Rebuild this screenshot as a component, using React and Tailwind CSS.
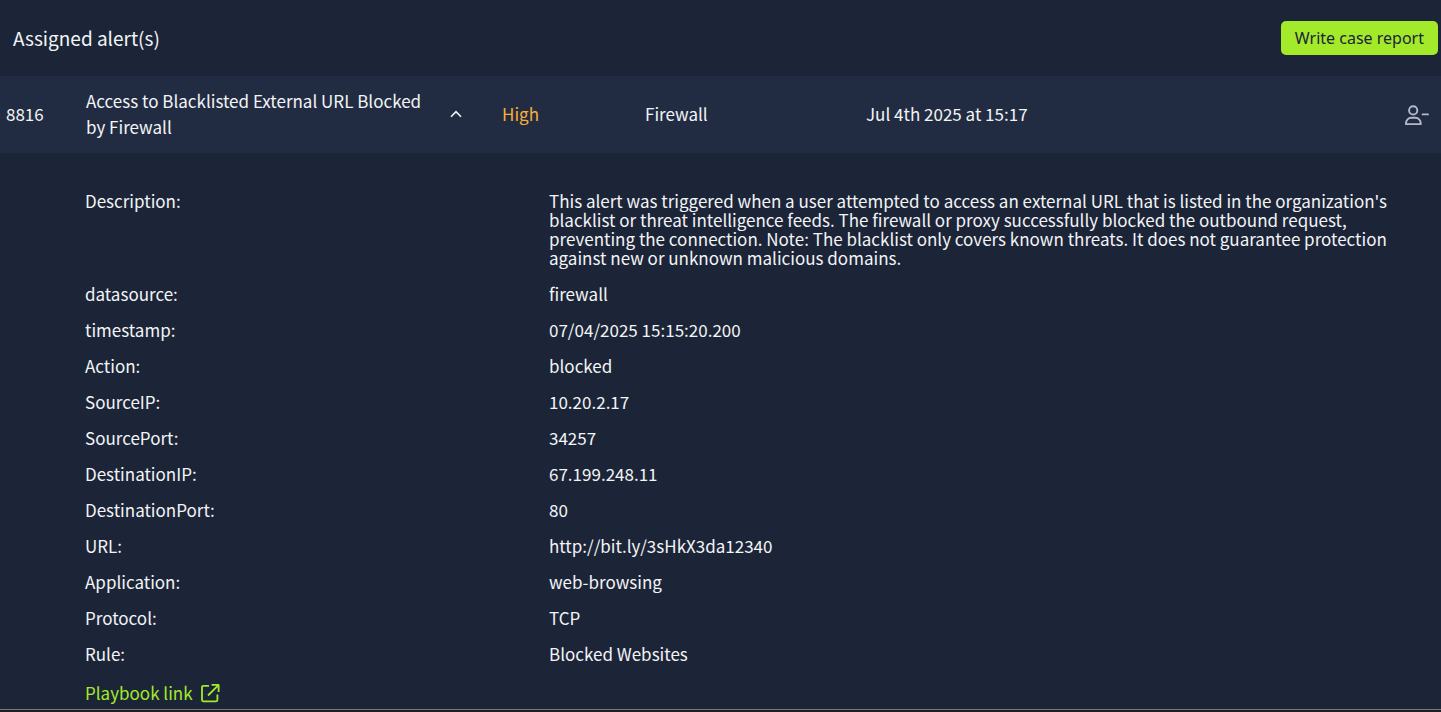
import React, { useState } from "react";

const details = [
  [
    "Description:",
    "This alert was triggered when a user attempted to access an external URL that is listed in the organization's blacklist or threat intelligence feeds. The firewall or proxy successfully blocked the outbound request, preventing the connection. Note: The blacklist only covers known threats. It does not guarantee protection against new or unknown malicious domains.",
  ],
  ["datasource:", "firewall"],
  ["timestamp:", "07/04/2025 15:15:20.200"],
  ["Action:", "blocked"],
  ["SourceIP:", "10.20.2.17"],
  ["SourcePort:", "34257"],
  ["DestinationIP:", "67.199.248.11"],
  ["DestinationPort:", "80"],
  ["URL:", "http://bit.ly/3sHkX3da12340"],
  ["Application:", "web-browsing"],
  ["Protocol:", "TCP"],
  ["Rule:", "Blocked Websites"],
];

function ChevronUp({ open }) {
  return (
    <svg
      viewBox="0 0 12 8"
      className={open ? "h-2 w-3" : "h-2 w-3 rotate-180"}
      fill="none"
      stroke="currentColor"
      strokeWidth="1.6"
      aria-hidden="true"
    >
      <path d="M1 6.8 6 1.6l5 5.2" />
    </svg>
  );
}

function UserMinus() {
  return (
    <svg
      viewBox="0 0 24 20"
      className="h-5 w-6"
      fill="none"
      stroke="currentColor"
      strokeWidth="1.9"
      strokeLinejoin="round"
      strokeLinecap="round"
      aria-hidden="true"
    >
      <circle cx="8.2" cy="5.4" r="4.1" />
      <path d="M1 19.2v-.9c0-3.2 2.4-5.6 5.2-5.6h4.3c2.8 0 5.2 2.4 5.2 5.6v.9z" />
      <path d="M17.6 9.4h5.4" />
    </svg>
  );
}

function ExternalLink() {
  return (
    <svg
      viewBox="0 0 20 20"
      className="h-5 w-5"
      fill="none"
      stroke="currentColor"
      strokeWidth="1.8"
      strokeLinejoin="round"
      aria-hidden="true"
    >
      <path d="M9 2.9H3.2A1.2 1.2 0 0 0 2 4.1v13a1.2 1.2 0 0 0 1.2 1.2h13a1.2 1.2 0 0 0 1.2-1.2v-5.7" />
      <path d="M11.6 1.9h7v7M18.4 2.1 8 12.5" />
    </svg>
  );
}

export default function App() {
  const [open, setOpen] = useState(true);
  return (
    <main className="min-h-screen bg-[#1f1e20] font-['Noto_Sans_CJK_SC',sans-serif] text-[17px] text-[#f3f4f6]">
      <section className="border-b border-[#77777a] bg-[#1c2538]">
        <header className="flex h-[76px] items-center justify-between pr-[3px] pl-[13px]">
          <h1 className="text-[19px] leading-7">Assigned alert(s)</h1>
          <button
            type="button"
            className="h-[34px] rounded-[5px] bg-[#a3ea2a] px-[14px] font-['Noto_Sans',sans-serif] text-base text-[#1c2538]"
          >
            Write case report
          </button>
        </header>

        <table className="w-full table-fixed border-collapse text-left">
          <colgroup>
            <col className="w-20" />
            <col className="w-[416px]" />
            <col className="w-[143px]" />
            <col className="w-[221px]" />
            <col />
            <col className="w-[60px]" />
          </colgroup>
          <tbody>
            <tr className="h-[77px] bg-[#212c42] leading-[26px]">
              <td className="px-[6px] pb-[2px]">8816</td>
              <td className="px-[6px] pb-[2px]">
                <button
                  type="button"
                  aria-expanded={open}
                  onClick={() => setOpen(!open)}
                  className="flex w-full items-center justify-between gap-6 pr-[28px] text-left"
                >
                  <span>Access to Blacklisted External URL Blocked by Firewall</span>
                  <span className="shrink-0">
                    <ChevronUp open={open} />
                  </span>
                </button>
              </td>
              <td className="px-[6px] pb-[2px] text-[#f9ae3b]">High</td>
              <td className="px-[6px] pb-[2px]">Firewall</td>
              <td className="px-[6px] pb-[2px]">Jul 4th 2025 at 15:17</td>
              <td className="pr-3">
                <button
                  type="button"
                  aria-label="Unassign alert"
                  className="ml-auto block text-[#b4b9ca]"
                >
                  <UserMinus />
                </button>
              </td>
            </tr>
          </tbody>
        </table>

        {open && (
          <div className="pt-[38px] pr-9 pb-1 pl-[85px]">
            <dl className="flex flex-col gap-[17px] leading-[19px]">
              {details.map(([label, value]) => (
                <div key={label} className="flex">
                  <dt className="w-[464px] shrink-0">{label}</dt>
                  <dd className="min-w-0 flex-1">{value}</dd>
                </div>
              ))}
            </dl>
            <a
              href="#playbook"
              className="mt-[18px] inline-flex items-center gap-[7px] align-top leading-6 text-[#a3ea2a]"
            >
              Playbook link
              <ExternalLink />
            </a>
          </div>
        )}
      </section>
    </main>
  );
}
